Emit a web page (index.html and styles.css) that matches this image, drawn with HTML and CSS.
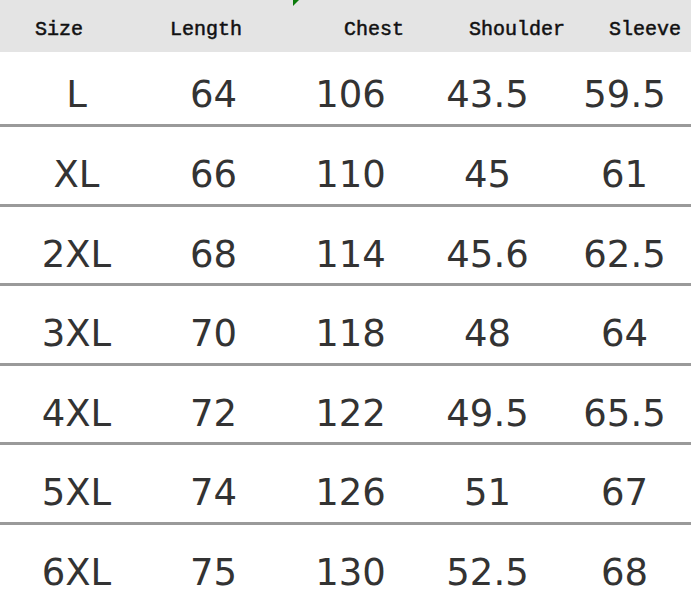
FILE: index.html
```html
<!DOCTYPE html>
<html>
<head>
<meta charset="utf-8">
<link rel="stylesheet" href="styles.css">
</head>
<body>
<div class="chart">
  <span class="mark"><svg width="6" height="6" viewBox="0 0 6 6"><polygon points="0,0 6,0 0,6" fill="#0b7a0b"/></svg></span>
  <div class="head">
    <div class="hc first">Size</div>
    <div class="hc">Length</div>
    <div class="hc">Chest</div>
    <div class="hc">Shoulder</div>
    <div class="hc">Sleeve</div>
  </div>
  <div class="row top"><div>L</div><div>64</div><div>106</div><div>43.5</div><div>59.5</div></div>
  <div class="row"><div>XL</div><div>66</div><div>110</div><div>45</div><div>61</div></div>
  <div class="row"><div>2XL</div><div>68</div><div>114</div><div>45.6</div><div>62.5</div></div>
  <div class="row"><div>3XL</div><div>70</div><div>118</div><div>48</div><div>64</div></div>
  <div class="row"><div>4XL</div><div>72</div><div>122</div><div>49.5</div><div>65.5</div></div>
  <div class="row"><div>5XL</div><div>74</div><div>126</div><div>51</div><div>67</div></div>
  <div class="row last"><div>6XL</div><div>75</div><div>130</div><div>52.5</div><div>68</div></div>
</div>
</body>
</html>
```

FILE: styles.css
```css
html, body {
  margin: 0;
  padding: 0;
  background: #ffffff;
}
.chart {
  position: relative;
  width: 691px;
  height: 599px;
  overflow: hidden;
}
.mark {
  position: absolute;
  left: 293px;
  top: 0;
  line-height: 0;
}
.head {
  display: grid;
  grid-template-columns: 170px 174px 125px 140px 1fr;
  height: 52px;
  box-sizing: border-box;
  padding-top: 7px;
  background: #e4e4e4;
  font-family: "Liberation Mono", "DejaVu Sans Mono", monospace;
  font-size: 20px;
  line-height: 45px;
  color: #111111;
  -webkit-text-stroke: 0.5px #111111;
}
.hc.first {
  padding-left: 35px;
}
.row {
  display: grid;
  grid-template-columns: repeat(5, 137px);
  padding-left: 8px;
  height: 79.5px;
  box-sizing: border-box;
  padding-top: 26px;
  border-bottom: 3px solid #9a9a9a;
  font-family: "DejaVu Sans", Verdana, sans-serif;
  font-size: 37px;
  line-height: 43px;
  color: #333333;
  text-align: center;
}
.row.top {
  height: 75px;
  padding-top: 21px;
}
.row.last {
  border-bottom: none;
}
```
